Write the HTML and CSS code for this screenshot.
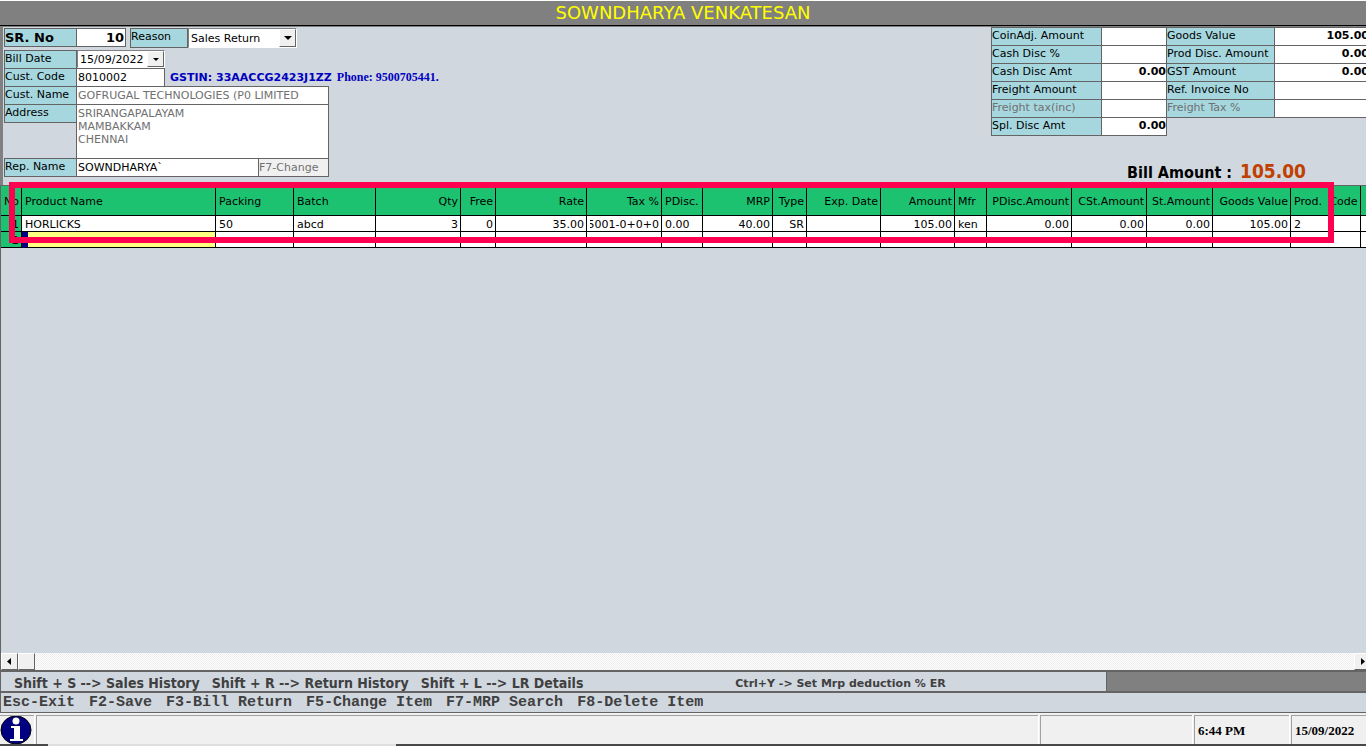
FILE: index.html
```html
<!DOCTYPE html>
<html lang="en">
<head>
  <meta charset="UTF-8">
  <title>Sales Return</title>
  <link rel="stylesheet" href="styles.css">
</head>
<body>

  <h1 class="title">SOWNDHARYA VENKATESAN</h1>

  <form class="top">
    <div class="customer">
      <div class="row first">
        <label class="label strong" for="srno">SR. No</label>
        <input class="field short strong right" id="srno" value="10">
        <label class="label reason" for="reason">Reason</label>
        <div class="combo">
          <select id="reason"><option>Sales Return</option></select>
          <span class="arrow"></span>
        </div>
      </div>
      <div class="row">
        <label class="label" for="billdate">Bill Date</label>
        <div class="combo date">
          <select id="billdate"><option>15/09/2022</option></select>
          <span class="arrow small"></span>
        </div>
      </div>
      <div class="row">
        <label class="label" for="code">Cust. Code</label>
        <input class="field code" id="code" value="8010002">
        <span class="gstin">GSTIN: 33AACCG2423J1ZZ</span>
        <span class="phone">Phone: 9500705441.</span>
      </div>
      <div class="row">
        <label class="label" for="name">Cust. Name</label>
        <input class="field wide dim" id="name" value="GOFRUGAL TECHNOLOGIES (P0 LIMITED">
      </div>
      <div class="row">
        <label class="label" for="address">Address</label>
        <textarea class="field address wide dim" id="address">SRIRANGAPALAYAM
MAMBAKKAM
CHENNAI</textarea>
      </div>
      <div class="row">
        <label class="label" for="rep">Rep. Name</label>
        <input class="field rep" id="rep" value="SOWNDHARYA`">
        <button class="change" type="button">F7-Change</button>
      </div>
    </div>

    <div class="totals">
      <div class="amounts">
        <label class="label" for="coin">CoinAdj. Amount</label>
        <input class="field strong right" id="coin">
        <label class="label" for="goods">Goods Value</label>
        <input class="field strong right" id="goods" value="105.00">

        <label class="label" for="cashp">Cash Disc %</label>
        <input class="field strong right" id="cashp">
        <label class="label" for="prod">Prod Disc. Amount</label>
        <input class="field strong right" id="prod" value="0.00">

        <label class="label" for="casha">Cash Disc Amt</label>
        <input class="field strong right" id="casha" value="0.00">
        <label class="label" for="gst">GST Amount</label>
        <input class="field strong right" id="gst" value="0.00">

        <label class="label" for="freight">Freight Amount</label>
        <input class="field strong right" id="freight">
        <label class="label" for="ref">Ref. Invoice No</label>
        <input class="field strong right" id="ref">

        <label class="label dim" for="ftax">Freight tax(inc)</label>
        <input class="field strong right" id="ftax">
        <label class="label dim" for="ftaxp">Freight Tax %</label>
        <input class="field strong right" id="ftaxp">

        <label class="label" for="spl">Spl. Disc Amt</label>
        <input class="field strong right" id="spl" value="0.00">
      </div>
      <div class="bill">
        <span>Bill Amount :</span>
        <span class="bill-value">105.00</span>
      </div>
    </div>
  </form>

  <main class="grid">
    <table class="items">
      <colgroup>
        <col class="c-no"><col class="c-name"><col class="c-pack"><col class="c-batch"><col class="c-qty">
        <col class="c-free"><col class="c-rate"><col class="c-tax"><col class="c-pdisc"><col class="c-mrp">
        <col class="c-type"><col class="c-exp"><col class="c-amt"><col class="c-mfr"><col class="c-pamt">
        <col class="c-cst"><col class="c-st"><col class="c-goods"><col class="c-code"><col class="c-rest">
      </colgroup>
      <thead>
        <tr>
          <th class="num">No</th><th>Product Name</th><th>Packing</th><th>Batch</th><th class="num">Qty</th>
          <th class="num">Free</th><th class="num">Rate</th><th class="num">Tax %</th><th>PDisc.</th><th class="num">MRP</th>
          <th class="num">Type</th><th class="num">Exp. Date</th><th class="num">Amount</th><th>Mfr</th><th class="num">PDisc.Amount</th>
          <th class="num">CSt.Amount</th><th class="num">St.Amount</th><th class="num">Goods Value</th><th class="code-head">Prod. <span>Code</span></th><th></th>
        </tr>
      </thead>
      <tbody>
        <tr>
          <th class="num">1</th><td>HORLICKS</td><td>50</td><td>abcd</td><td class="num">3</td>
          <td class="num">0</td><td class="num">35.00</td><td><div class="clip">5001-0+0+0</div></td><td>0.00</td><td class="num">40.00</td>
          <td class="num">SR</td><td></td><td class="num">105.00</td><td>ken</td><td class="num">0.00</td>
          <td class="num">0.00</td><td class="num">0.00</td><td class="num">105.00</td><td>2</td><td></td>
        </tr>
        <tr>
          <th class="num">2</th><td class="current"></td><td></td><td></td><td></td>
          <td></td><td></td><td></td><td></td><td></td>
          <td></td><td></td><td></td><td></td><td></td>
          <td></td><td></td><td></td><td></td><td></td>
        </tr>
      </tbody>
    </table>
    <div class="marker"></div>
  </main>

  <div class="scrollbar">
    <button class="scroll-btn" aria-label="Scroll left"><svg width="5" height="7" viewBox="0 0 5 7"><path d="M4 0v7L0 3.5z"/></svg></button>
    <div class="thumb"></div>
    <button class="scroll-btn last" aria-label="Scroll right"><svg width="5" height="7" viewBox="0 0 5 7"><path d="M1 0v7l4-3.5z"/></svg></button>
  </div>

  <div class="hints">
    <div class="hints-inner">
      <span>Shift + S --&gt; Sales History</span>
      <span>Shift + R --&gt; Return History</span>
      <span>Shift + L --&gt; LR Details</span>
      <span class="mrp-hint">Ctrl+Y -&gt; Set Mrp deduction % ER</span>
    </div>
  </div>

  <div class="keys">
    <span>Esc-Exit</span>
    <span>F2-Save</span>
    <span>F3-Bill Return</span>
    <span>F5-Change Item</span>
    <span>F7-MRP Search</span>
    <span>F8-Delete Item</span>
  </div>

  <footer class="status">
    <div class="panel info">
      <svg width="32" height="29" viewBox="0 0 32 29">
        <ellipse cx="16" cy="14" rx="15" ry="14" fill="#000080" stroke="#000"/>
        <circle cx="16" cy="5" r="3.5" fill="#fff"/>
        <path d="M11 10h9v13h3v2H10v-2h4V12h-3z" fill="#fff"/>
      </svg>
    </div>
    <div class="panel message"></div>
    <div class="panel middle"></div>
    <div class="panel time">6:44 PM</div>
    <div class="panel day">15/09/2022</div>
  </footer>
  <div class="edge"><span></span></div>

</body>
</html>
```

FILE: styles.css
```css
* {
  box-sizing: border-box;
}

body {
  margin: 0;
  height: 100vh;
  display: flex;
  flex-direction: column;
  overflow: hidden;
  background: #d0d7df;
  color: #000;
  font-family: "DejaVu Sans", Verdana, sans-serif;
  font-size: 11px;
}

input,
select,
textarea,
button {
  font: inherit;
  color: inherit;
  margin: 0;
  padding: 0;
  border-radius: 0;
}

.title {
  margin: 0;
  height: 26px;
  border-top: 1px solid #fff;
  border-bottom: 1px solid #000;
  background: #808080;
  color: #ff0;
  font-size: 18px;
  font-weight: normal;
  line-height: 23px;
  text-align: center;
}

/* bill header */

.top {
  display: flex;
  justify-content: space-between;
  height: 159px;
  border-top: 1px solid #808080;
  border-left: 3px solid #808080;
  overflow: hidden;
}

.customer {
  padding: 1px 0 0 1px;
}

.row {
  display: flex;
  align-items: flex-start;
  margin-bottom: -1px;
}

.first {
  margin-bottom: 2px;
}

.label,
.field {
  height: 19px;
  border: 1px solid #646464;
}

.label {
  width: 73px;
  background: #a6d7df;
  line-height: 15px;
  white-space: nowrap;
}

.field {
  margin-left: -1px;
  padding: 0 1px;
  background: #fff;
}

.strong {
  font-weight: bold;
}

.row .strong {
  font-size: 13px;
  line-height: 17px;
}

.right {
  text-align: right;
}

.dim {
  color: #707070;
}

.short {
  width: 50px;
}

.reason {
  width: 58px;
  height: 20px;
  margin-left: 4px;
}

.code {
  width: 89px;
}

.wide {
  width: 253px;
}

.address {
  height: 55px;
  padding-top: 2px;
  line-height: 13px;
  resize: none;
  overflow: hidden;
}

.rep {
  width: 183px;
}

.change {
  width: 71px;
  height: 19px;
  margin-left: -1px;
  border: 1px solid #646464;
  background: #f0f0f0;
  color: #707070;
  line-height: 15px;
  text-align: left;
}

.combo {
  display: grid;
  width: 109px;
  height: 20px;
  border: 1px solid #808080;
  border-right-color: #fff;
  border-bottom-color: #fff;
  background: #fff;
}

.combo select {
  grid-area: 1 / 1;
  padding-left: 2px;
  appearance: none;
  border: 0;
  background: #fff;
}

.date {
  width: 88px;
  height: 18px;
}

.arrow {
  grid-area: 1 / 1;
  justify-self: end;
  width: 17px;
  border: 1px solid #fff;
  border-right-color: #646464;
  border-bottom-color: #646464;
  background: #f0f0f0;
  display: flex;
  align-items: center;
  justify-content: center;
  pointer-events: none;
}

.arrow::after {
  content: "";
  border: 4px solid transparent;
  border-top-color: #000;
  border-bottom: 0;
}

.small::after {
  border-width: 3px 3px 0;
}

.gstin,
.phone {
  margin-left: 5px;
  color: #0000c0;
  font-weight: bold;
  line-height: 19px;
}

.phone {
  font-family: "Liberation Serif", serif;
  font-size: 12px;
}

/* totals */

.totals {
  margin-right: -3px;
}

.amounts {
  display: grid;
  grid-template-columns: 110px 65px 108px 95px;
  grid-auto-rows: 18px;
}

.amounts .label {
  width: auto;
  margin-right: -1px;
}

.amounts .field {
  width: calc(100% + 1px);
  margin: 0;
  padding: 0 0 2px;
}

.bill {
  display: flex;
  align-items: baseline;
  justify-content: flex-end;
  gap: 8px;
  margin: 25px 63px 0 0;
  font-family: "DejaVu Sans Condensed", "DejaVu Sans", sans-serif;
  font-size: 16px;
  font-weight: bold;
}

.bill-value {
  color: #c04000;
  font-size: 19px;
}

/* product grid */

.grid {
  position: relative;
  flex: 1;
  overflow-x: clip;
  border-top: 1px solid #646464;
  border-left: 1px solid #646464;
}

.items {
  width: 1380px;
  table-layout: fixed;
  border-spacing: 0;
}

.c-no { width: 21px; }
.c-name { width: 194px; }
.c-pack { width: 78px; }
.c-batch { width: 82px; }
.c-qty { width: 85px; }
.c-free { width: 35px; }
.c-rate { width: 91px; }
.c-tax { width: 75px; }
.c-pdisc { width: 41px; }
.c-mrp { width: 70px; }
.c-type { width: 34px; }
.c-exp { width: 74px; }
.c-amt { width: 74px; }
.c-mfr { width: 32px; }
.c-pamt { width: 85px; }
.c-cst { width: 75px; }
.c-st { width: 66px; }
.c-goods { width: 78px; }
.c-code { width: 70px; }
.c-rest { width: 20px; }

.items th,
.items td {
  height: 16px;
  padding: 2px 2px 0 3px;
  border-right: 1px solid #000;
  border-bottom: 1px solid #000;
  background: #fff;
  font-weight: normal;
  line-height: 13px;
  text-align: left;
  white-space: nowrap;
}

.items th {
  background: #1dc270;
}

.items thead th {
  height: 30px;
}

.items .num {
  text-align: right;
}

.items .code-head span {
  margin-left: 4px;
}

.items .current {
  border-left: 6px solid #000080;
  background: #ffff80;
}

.clip {
  display: flex;
  justify-content: flex-end;
  overflow: hidden;
}

/* red frame over the item rows */
.marker {
  position: absolute;
  top: -4px;
  left: 8px;
  right: 32px;
  height: 61px;
  border: 6px solid #ff0050;
}

/* bottom bars */

.scrollbar {
  display: flex;
  height: 17px;
  border-left: 1px solid #646464;
  background: repeating-conic-gradient(#fff 0 25%, #ededed 0 50%) 0 0 / 2px 2px;
}

.scroll-btn,
.thumb {
  display: flex;
  align-items: center;
  justify-content: center;
  width: 17px;
  border: 1px solid #fff;
  border-right-color: #646464;
  border-bottom-color: #646464;
  background: #f0f0f0;
}

.last {
  margin-left: auto;
  margin-right: -5px;
}

.hints {
  height: 23px;
  border: solid #646464;
  border-width: 2px 0 2px 1px;
  background: #808080;
}

.hints-inner {
  display: flex;
  align-items: center;
  gap: 12px;
  width: 81%;
  height: 19px;
  padding: 4px 0 0 13px;
  border-right: 1px solid #646464;
  background: #d0d7df;
  color: #404040;
  font-family: "DejaVu Sans Condensed", "DejaVu Sans", sans-serif;
  font-size: 14px;
  font-weight: bold;
  line-height: 15px;
  white-space: nowrap;
}

.hints-inner .mrp-hint {
  margin: 0 160px 0 auto;
  font-family: "DejaVu Sans", sans-serif;
  font-size: 11px;
}

.keys {
  display: flex;
  gap: 14px;
  height: 20px;
  padding-left: 2px;
  border-left: 1px solid #646464;
  border-bottom: 1px solid #646464;
  color: #404040;
  font-family: "Liberation Mono", monospace;
  font-size: 15px;
  font-weight: bold;
  line-height: 20px;
  white-space: nowrap;
}

.status {
  display: flex;
  gap: 2px;
  height: 31px;
  padding-top: 2px;
  background: #f0f0f0;
  font-family: "Liberation Serif", serif;
  font-size: 13px;
  font-weight: bold;
  line-height: 30px;
}

.panel {
  border: solid #a0a0a0;
  border-width: 1px 0 0 1px;
  box-shadow: 1px 0 #fff;
  padding-left: 3px;
  white-space: nowrap;
}

.info {
  width: 34px;
  padding: 0;
  border-left: 0;
  line-height: 0;
}

.message {
  flex: 1;
}

.middle {
  width: 152px;
}

.time {
  width: 95px;
}

.day {
  width: 75px;
}

.edge {
  height: 2px;
  padding: 0 71% 0 48px;
  background: #484848;
}

.edge span {
  display: block;
  height: 2px;
  background: #e0e0e0;
}
```
